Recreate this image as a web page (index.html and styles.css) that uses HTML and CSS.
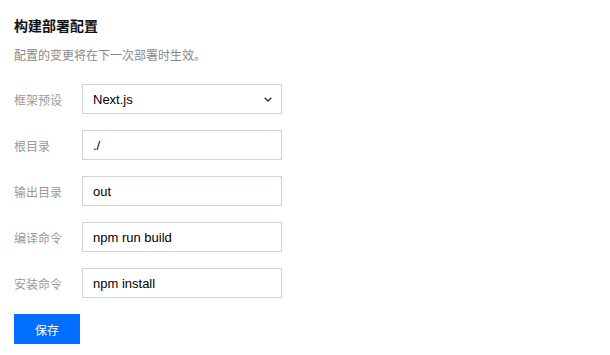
FILE: index.html
```html
<!DOCTYPE html>
<html lang="zh-CN">
<head>
<meta charset="utf-8">
<link rel="stylesheet" href="styles.css">
</head>
<body>
<div class="panel">
  <h1 class="title">构建部署配置</h1>
  <p class="desc">配置的变更将在下一次部署时生效。</p>
  <div class="form">
    <div class="row">
      <label class="label">框架预设</label>
      <div class="field select">
        <span class="value">Next.js</span>
        <svg class="chev" width="8" height="5" viewBox="0 0 8 5"><path d="M0.7 0.7l3.3 3.3 3.3-3.3" fill="none" stroke="#333" stroke-width="1.4"/></svg>
      </div>
    </div>
    <div class="row">
      <label class="label">根目录</label>
      <div class="field"><span class="value">./</span></div>
    </div>
    <div class="row">
      <label class="label">输出目录</label>
      <div class="field"><span class="value">out</span></div>
    </div>
    <div class="row">
      <label class="label">编译命令</label>
      <div class="field"><span class="value">npm run build</span></div>
    </div>
    <div class="row">
      <label class="label">安装命令</label>
      <div class="field"><span class="value">npm install</span></div>
    </div>
    <div class="actions">
      <button class="btn">保存</button>
    </div>
  </div>
</div>
</body>
</html>
```
FILE: styles.css
```css
html, body {
  margin: 0;
  padding: 0;
  background: #fff;
}
body {
  font-family: "Liberation Sans", "Noto Sans CJK SC", sans-serif;
  color: #000;
}
.panel {
  padding: 15px 14px 0 14px;
}
.title {
  margin: 0;
  font-size: 14px;
  line-height: 22px;
  font-weight: 700;
  color: #111;
}
.desc {
  margin: 9px 0 0 0;
  font-size: 12px;
  line-height: 20px;
  color: #888;
}
.form {
  margin-top: 18px;
  display: flex;
  flex-direction: column;
  gap: 16px;
}
.row {
  display: flex;
  align-items: center;
  height: 30px;
}
.label {
  width: 68px;
  font-size: 12px;
  color: #999;
  font-family: "Noto Sans CJK SC", sans-serif;
}
.field {
  box-sizing: border-box;
  width: 200px;
  height: 30px;
  border: 1px solid #cfd4dc;
  display: flex;
  align-items: center;
  padding: 0 10px;
  font-size: 13px;
  color: #000;
}
.select {
  justify-content: space-between;
  padding-right: 9px;
}
.chev {
  display: block;
}
.actions {
  display: flex;
}
.btn {
  width: 66px;
  height: 30px;
  border: 0;
  background: #006eff;
  color: #fff;
  font-size: 12px;
  font-family: "Noto Sans CJK SC", sans-serif;
  padding: 0;
}
```
